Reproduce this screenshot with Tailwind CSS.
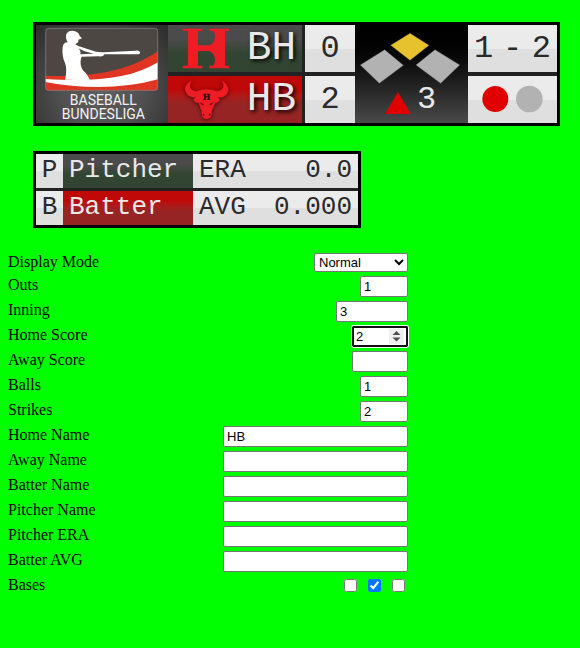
<!DOCTYPE html>
<html lang="en">
<head>
<meta charset="utf-8">
<title>Baseball Scoreboard</title>
<script src="https://cdn.jsdelivr.net/npm/@tailwindcss/browser@4"></script>
</head>
<body class="min-h-screen bg-[#00ff00] px-2 pt-[22px] text-black font-['Liberation_Serif',serif]">

<section aria-label="Scoreboard" class="ml-[25px] mr-3 grid max-w-[527px] grid-cols-[132fr_134fr_3px_50fr_113fr_89fr] border-3 border-black bg-[#222] font-['Liberation_Mono',monospace] text-[32px] leading-[47px] text-[#2a2a2a]">
  <div class="bg-[radial-gradient(ellipse_at_50%_65%,#606060_0%,#505050_45%,#2b2b2b_100%)]">
    <svg viewBox="18 21 396 294" class="block w-full" role="img" aria-label="Baseball Bundesliga">
      <defs><clipPath id="plaque"><rect x="46" y="30" width="338" height="188" rx="9"/></clipPath></defs>
      <g clip-path="url(#plaque)">
        <rect x="46" y="30" width="338" height="188" fill="#4c4742"/>
        <path d="M46 173C190 179 300 158 384 99V218H46Z" fill="#e03523"/>
        <path d="M46 183C190 192 300 184 384 133V184C280 213 160 213 46 192Z" fill="#fff"/>
      </g>
      <rect x="47" y="31" width="336" height="186" rx="9" fill="none" stroke="#858585" stroke-width="2"/>
      <path d="M110 67C104 48 112 38 127 38C140 39 148 46 149 54L156 61L145 65L145 72L136 79L145 84L170 92L198 101L216 103L222 103L318 98C332 96 334 109 324 109L223 109C220 115 214 117 207 115L155 116C149 130 152 147 160 158C171 167 176 178 180 187L105 185C110 165 110 148 105 135C98 121 96 104 98 88C99 78 104 73 113 73Z" fill="#fff"/>
      <path d="M145 91L162 99L190 107L151 109C153 102 150 96 145 91Z" fill="#4c4742"/>
      <g fill="#f2f2f2" font-family="Roboto, sans-serif" font-size="42" text-anchor="middle">
        <text x="220" y="262">BASEBALL</text>
        <text x="220" y="302">BUNDESLIGA</text>
      </g>
    </svg>
  </div>

  <div class="grid grid-rows-2 gap-1 text-[41px] text-[#e8e8e8]">
    <div class="flex items-center justify-between bg-linear-to-b from-[#4b4b4b] from-30% to-[#324532] to-60% pr-1.5">
      <svg viewBox="9 21 198 141" class="h-[47px] w-[66px]" aria-hidden="true">
        <path d="M53 32H112V39H99V82H132C150 78 155 52 145 39H133V32H192V39H180V143H192V151H133V143H145C155 130 150 104 132 99H99V143H112V151H53V143H69V39H53Z" fill="#ee1c25"/>
      </svg>
      <span class="[text-shadow:2px_2px_4px_#000]">BH</span>
    </div>
    <div class="flex items-center justify-between bg-linear-to-b from-[#bf0808] from-30% to-[#962424] to-60% pr-1.5">
      <svg viewBox="9 174 198 141" class="h-[47px] w-[66px] drop-shadow-[0_1px_2px_rgb(0_0_0/0.6)]" aria-hidden="true">
        <path d="M82 187C69 202 75 219 96 220C112 212 138 212 154 220C176 219 181 202 169 187C190 199 199 220 180 233C174 238 165 239 158 238L165 243C162 252 155 255 150 255C148 265 142 271 140 280C141 295 136 303 125 303C114 303 109 295 110 280C108 271 103 265 101 255C96 255 87 252 85 243L93 238C84 239 74 237 68 231C53 216 60 198 82 187Z" fill="#ee1c25"/>
        <path d="M103 252L118 259L111 262ZM147 252L132 259L139 262Z" fill="#7a1015"/>
        <circle cx="116" cy="290" r="3" fill="#7a1015"/><circle cx="134" cy="290" r="3" fill="#7a1015"/>
        <path d="M115 227H124V230H122V235H128V230H126V227H136V230H134V243H136V246H126V243H128V238H122V243H124V246H115V243H117V230H115Z" fill="#3c080b"/>
      </svg>
      <span class="[text-shadow:2px_2px_4px_#000]">HB</span>
    </div>
  </div>

  <div></div>

  <div class="grid grid-rows-2 gap-1 text-center">
    <div class="bg-linear-to-b from-[#ebebeb] from-50% to-[#dfdfdf] to-50%">0</div>
    <div class="bg-linear-to-b from-[#ebebeb] from-50% to-[#dfdfdf] to-50%">2</div>
  </div>

  <div class="bg-linear-to-b from-black to-[#4a4a4a]">
    <svg viewBox="165 21 339 294" class="block w-full" role="img" aria-label="Runner on second, top of inning 3">
      <g stroke="#777" stroke-width="1">
        <path d="M330 46L387 82L330 127L272 82Z" fill="#e6c32c"/>
        <path d="M254 95L310 142L238 196L181 141Z" fill="#b2b2b2"/>
        <path d="M405 95L479 141L422 196L348 141Z" fill="#b2b2b2"/>
      </g>
      <path d="M294 222L332 288H255Z" fill="#e00000"/>
      <text x="351" y="269" font-size="96" fill="#e8e8e8">3</text>
    </svg>
  </div>

  <div class="grid grid-rows-2 gap-1">
    <div class="flex justify-between bg-linear-to-b from-[#ebebeb] from-50% to-[#dfdfdf] to-50% px-1.5"><span>1</span><span>-</span><span>2</span></div>
    <div class="bg-linear-to-b from-[#ebebeb] from-50% to-[#dfdfdf] to-50%">
      <svg viewBox="114 174 267 141" class="block h-[47px] w-full" role="img" aria-label="One out">
        <circle cx="196" cy="243" r="39" fill="#e00000"/>
        <circle cx="298" cy="243" r="40" fill="#b2b2b2"/>
      </svg>
    </div>
  </div>
</section>

<section aria-label="Player statistics" class="mt-[25px] ml-[25px] grid max-w-[328px] gap-[3px] border-3 border-black bg-[#222] font-['Liberation_Mono',monospace] text-[26px] leading-8 text-[#2a2a2a]">
  <div class="grid grid-cols-[27px_130fr_165fr] *:pb-0.5">
    <div class="bg-linear-to-b from-[#ebebeb] from-50% to-[#dfdfdf] to-50% text-center">P</div>
    <div class="bg-linear-to-b from-[#4b4b4b] from-30% to-[#324532] to-60% pl-1.5 text-[#e8e8e8]">Pitcher</div>
    <div class="flex justify-between bg-linear-to-b from-[#ebebeb] from-50% to-[#dfdfdf] to-50% px-1.5"><span>ERA</span><span>0.0</span></div>
  </div>
  <div class="grid grid-cols-[27px_130fr_165fr] *:pb-0.5">
    <div class="bg-linear-to-b from-[#ebebeb] from-50% to-[#dfdfdf] to-50% text-center">B</div>
    <div class="bg-linear-to-b from-[#bf0808] from-30% to-[#962424] to-60% pl-1.5 text-[#e8e8e8]">Batter</div>
    <div class="flex justify-between bg-linear-to-b from-[#ebebeb] from-50% to-[#dfdfdf] to-50% px-1.5"><span>AVG</span><span>0.000</span></div>
  </div>
</section>

<form class="mt-[25px] max-w-[400px] text-base leading-[18px] [&>div]:flex [&>div]:h-[25px] [&>div]:items-start [&>div]:justify-between [&_input]:font-['Liberation_Sans',sans-serif] [&_input]:text-[13px]">
  <div class="!h-[23px]"><label for="mode">Display Mode</label>
    <select id="mode" class="h-[19px] w-[94px] rounded-[2px] border border-[#767676] bg-white font-['Liberation_Sans',sans-serif] text-[13px] leading-4"><option>Normal</option></select></div>
  <div><label for="outs">Outs</label><input id="outs" type="number" value="1" class="h-[21px] w-12 rounded-[2px] border border-[#767676] bg-white px-[3px]"></div>
  <div><label for="inning">Inning</label><input id="inning" type="number" value="3" class="h-[21px] w-[72px] rounded-[2px] border border-[#767676] bg-white px-[3px]"></div>
  <div><label for="hs">Home Score</label>
    <span class="relative flex">
      <input id="hs" type="number" value="2" autofocus class="h-[21px] w-14 rounded-[2px] border border-[#101010] bg-white px-[3px] shadow-[0_0_0_1px_#fff] outline-2 -outline-offset-2 outline-[#101010] [&::-webkit-inner-spin-button]:opacity-0">
      <svg viewBox="0 0 15 15" class="pointer-events-none absolute top-[3px] right-1 size-[15px]" aria-hidden="true"><rect width="15" height="15" fill="#efefef"/><path d="M7.5 2L11.5 6H3.5ZM7.5 12.500L11.500 8.500H3.500Z" fill="#505050"/></svg>
    </span></div>
  <div><label for="as">Away Score</label><input id="as" type="number" class="h-[21px] w-14 rounded-[2px] border border-[#767676] bg-white px-[3px]"></div>
  <div><label for="balls">Balls</label><input id="balls" type="number" value="1" class="h-[21px] w-12 rounded-[2px] border border-[#767676] bg-white px-[3px]"></div>
  <div><label for="strikes">Strikes</label><input id="strikes" type="number" value="2" class="h-[21px] w-12 rounded-[2px] border border-[#767676] bg-white px-[3px]"></div>
  <div><label for="hn">Home Name</label><input id="hn" type="text" value="HB" class="h-[21px] w-[185px] rounded-[2px] border border-[#767676] bg-white px-[3px]"></div>
  <div><label for="an">Away Name</label><input id="an" type="text" class="h-[21px] w-[185px] rounded-[2px] border border-[#767676] bg-white px-[3px]"></div>
  <div><label for="bn">Batter Name</label><input id="bn" type="text" class="h-[21px] w-[185px] rounded-[2px] border border-[#767676] bg-white px-[3px]"></div>
  <div><label for="pn">Pitcher Name</label><input id="pn" type="text" class="h-[21px] w-[185px] rounded-[2px] border border-[#767676] bg-white px-[3px]"></div>
  <div><label for="pe">Pitcher ERA</label><input id="pe" type="text" class="h-[21px] w-[185px] rounded-[2px] border border-[#767676] bg-white px-[3px]"></div>
  <div><label for="ba">Batter AVG</label><input id="ba" type="text" class="h-[21px] w-[185px] rounded-[2px] border border-[#767676] bg-white px-[3px]"></div>
  <div><label for="b3">Bases</label>
    <span class="flex gap-[11px] p-[3px]"><input id="b3" type="checkbox" aria-label="Third base" class="size-[13px]"><input type="checkbox" aria-label="Second base" checked class="size-[13px]"><input type="checkbox" aria-label="First base" class="size-[13px]"></span></div>
</form>
</body>
</html>
